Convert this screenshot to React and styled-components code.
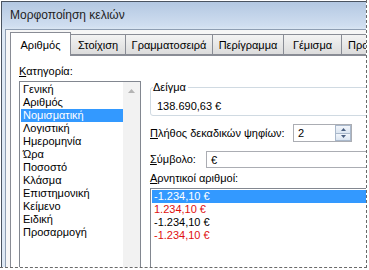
import styled, { createGlobalStyle } from "styled-components";

const GlobalStyle = createGlobalStyle`
  body {
    margin: 0;
    background: #ffffff;
    font-family: "Liberation Sans", Arial, sans-serif;
    font-size: 11px;
    color: #000;
  }
`;

const Crop = styled.div`
  width: 366px;
  height: 267px;
  overflow: hidden;
  border-right: 1px dashed #6a6a6a;
  border-bottom: 1px dashed #6a6a6a;
`;

const Window = styled.div`
  margin: 1px 0 0 1px;
  width: 430px;
  height: 300px;
  border-left: 1px solid #4a5461;
  border-top: 1px solid #4a5461;
  background: linear-gradient(#b3c8e2 0px, #d0def0 24px, #dde8f4 28px);
`;

const TitleBar = styled.div`
  height: 25px;
  display: flex;
  align-items: center;
  padding-left: 8px;
  font-size: 12px;
  color: #1e1e1e;
`;

const Client = styled.div`
  margin: 2px 0 0 3px;
  height: 280px;
  border-left: 1px solid #8e9eb3;
  border-top: 1px solid #8e9eb3;
  background: #f6f6f6;
  padding: 1px 0 0 4px;
`;

const TabRow = styled.div`
  display: flex;
  align-items: flex-end;
  height: 24px;
  position: relative;
  z-index: 1;
`;

const Tab = styled.div`
  width: ${(p) => p.$w}px;
  height: ${(p) => (p.$active ? 24 : 21)}px;
  margin-left: ${(p) => (p.$first ? 0 : -1)}px;
  margin-bottom: ${(p) => (p.$active ? -1 : 0)}px;
  box-sizing: border-box;
  border: 1px solid #898c95;
  border-bottom: ${(p) => (p.$active ? "none" : "1px solid #898c95")};
  background: ${(p) =>
    p.$active ? "#ffffff" : "linear-gradient(#f3f3f3, #e5e5e5 60%, #dcdcdc)"};
  display: flex;
  justify-content: ${(p) => (p.$clip ? "flex-start" : "center")};
  padding-left: ${(p) => (p.$clip ? 6 : 0)}px;
  align-items: center;
  padding-top: ${(p) => (p.$active ? 1 : 0)}px;
  white-space: nowrap;
  overflow: hidden;
  flex-shrink: 0;
`;

const Panel = styled.div`
  border: 1px solid #898c95;
  background: #ffffff;
  height: 260px;
  display: flex;
  gap: 9px;
  padding: 9px 0 0 8px;
`;

const LeftCol = styled.div`
  width: 122px;
  flex-shrink: 0;
`;

const RightCol = styled.div`
  flex: 1;
  padding-top: 16px;
`;

const Label = styled.div`
  line-height: 13px;
  white-space: nowrap;
  width: ${(p) => (p.$w ? `${p.$w}px` : "auto")};
  flex-shrink: 0;
  u {
    text-decoration: underline;
  }
`;

const ListBox = styled.div`
  display: flex;
  border: 1px solid #828790;
  background: #fff;
  height: ${(p) => p.$h}px;
  margin-top: ${(p) => p.$mt}px;
  width: ${(p) => (p.$wide ? "auto" : "120px")};
`;

const ListItems = styled.div`
  flex: 1;
  padding: 1px 0 0 1px;
`;

const Item = styled.div`
  height: 13px;
  line-height: 13px;
  padding-left: 2px;
  white-space: nowrap;
  background: ${(p) => (p.$selected ? "#3399ff" : "transparent")};
  color: ${(p) => (p.$selected ? "#fff" : p.$red ? "#e01010" : "#000")};
`;

const ScrollBar = styled.div`
  width: 17px;
  background: #f2f2f2;
  flex-shrink: 0;
`;

const ScrollButton = styled.div`
  height: 17px;
  display: flex;
  align-items: center;
  justify-content: center;
`;

const GroupBox = styled.fieldset`
  margin: 0;
  border: 1px solid #d0dae2;
  border-radius: 3px;
  padding: 6px 6px 2px 6px;
  min-width: 0;
`;

const Legend = styled.legend`
  padding: 0 2px 0 0;
  margin-left: -4px;
  line-height: 13px;
`;

const Value = styled.div`
  line-height: 13px;
`;

const FormRow = styled.div`
  display: flex;
  align-items: center;
  margin-top: ${(p) => p.$mt}px;
`;

const Spinner = styled.div`
  width: 59px;
  height: 18px;
  box-sizing: border-box;
  border: 1px solid #abadb3;
  display: flex;
  background: #fff;
`;

const InputText = styled.div`
  flex: 1;
  padding-left: 4px;
  line-height: 16px;
`;

const SpinButtons = styled.div`
  width: 16px;
  display: flex;
  flex-direction: column;
`;

const SpinButton = styled.div`
  flex: 1;
  box-sizing: border-box;
  border: 1px solid #a9b8cb;
  margin-top: ${(p) => (p.$down ? -1 : 0)}px;
  background: linear-gradient(#f2f6fb, #dbe5f1);
  display: flex;
  align-items: center;
  justify-content: center;
`;

const TextBox = styled.div`
  width: 240px;
  height: 17px;
  box-sizing: border-box;
  border: 1px solid #abadb3;
  background: #fff;
  display: flex;
  align-items: center;
  padding-left: 4px;
`;

const Triangle = ({ up = true, color, w = 7, h = 4 }) => (
  <svg width={w} height={h} viewBox={`0 0 ${w} ${h}`}>
    <polygon
      points={up ? `0,${h} ${w / 2},0 ${w},${h}` : `0,0 ${w / 2},${h} ${w},0`}
      fill={color}
    />
  </svg>
);

const tabs = [
  ["Αριθμός", 61],
  ["Στοίχιση", 56],
  ["Γραμματοσειρά", 88],
  ["Περίγραμμα", 72],
  ["Γέμισμα", 59],
  ["Προ", 30],
];

const categories = [
  "Γενική",
  "Αριθμός",
  "Νομισματική",
  "Λογιστική",
  "Ημερομηνία",
  "Ώρα",
  "Ποσοστό",
  "Κλάσμα",
  "Επιστημονική",
  "Κείμενο",
  "Ειδική",
  "Προσαρμογή",
];

const negatives = [
  { text: "-1.234,10 €", selected: true },
  { text: "1.234,10 €", red: true },
  { text: "-1.234,10 €" },
  { text: "-1.234,10 €", red: true },
];

export default function App() {
  return (
    <>
      <GlobalStyle />
      <Crop>
        <Window>
          <TitleBar>Μορφοποίηση κελιών</TitleBar>
          <Client>
            <TabRow>
              {tabs.map(([name, w], i) => (
                <Tab
                  key={name}
                  $w={w}
                  $first={i === 0}
                  $active={i === 0}
                  $clip={i === tabs.length - 1}
                >
                  {name}
                </Tab>
              ))}
            </TabRow>
            <Panel>
              <LeftCol>
                <Label>
                  <u>Κ</u>ατηγορία:
                </Label>
                <ListBox $h={220} $mt={3}>
                  <ListItems>
                    {categories.map((c) => (
                      <Item key={c} $selected={c === "Νομισματική"}>
                        {c}
                      </Item>
                    ))}
                  </ListItems>
                  <ScrollBar>
                    <ScrollButton>
                      <Triangle color="#b4b4b4" />
                    </ScrollButton>
                  </ScrollBar>
                </ListBox>
              </LeftCol>
              <RightCol>
                <GroupBox>
                  <Legend>Δείγμα</Legend>
                  <Value>138.690,63 €</Value>
                </GroupBox>
                <FormRow $mt={8}>
                  <Label $w={143}>
                    <u>Π</u>λήθος δεκαδικών ψηφίων:
                  </Label>
                  <Spinner>
                    <InputText>2</InputText>
                    <SpinButtons>
                      <SpinButton>
                        <Triangle color="#4a5f80" w={5} h={3} />
                      </SpinButton>
                      <SpinButton $down>
                        <Triangle up={false} color="#4a5f80" w={5} h={3} />
                      </SpinButton>
                    </SpinButtons>
                  </Spinner>
                </FormRow>
                <FormRow $mt={9}>
                  <Label $w={56}>
                    <u>Σ</u>ύμβολο:
                  </Label>
                  <TextBox>€</TextBox>
                </FormRow>
                <FormRow $mt={4}>
                  <Label>
                    <u>Α</u>ρνητικοί αριθμοί:
                  </Label>
                </FormRow>
                <ListBox $h={120} $mt={3} $wide>
                  <ListItems>
                    {negatives.map((n, i) => (
                      <Item key={i} $selected={n.selected} $red={n.red}>
                        {n.text}
                      </Item>
                    ))}
                  </ListItems>
                </ListBox>
              </RightCol>
            </Panel>
          </Client>
        </Window>
      </Crop>
    </>
  );
}
